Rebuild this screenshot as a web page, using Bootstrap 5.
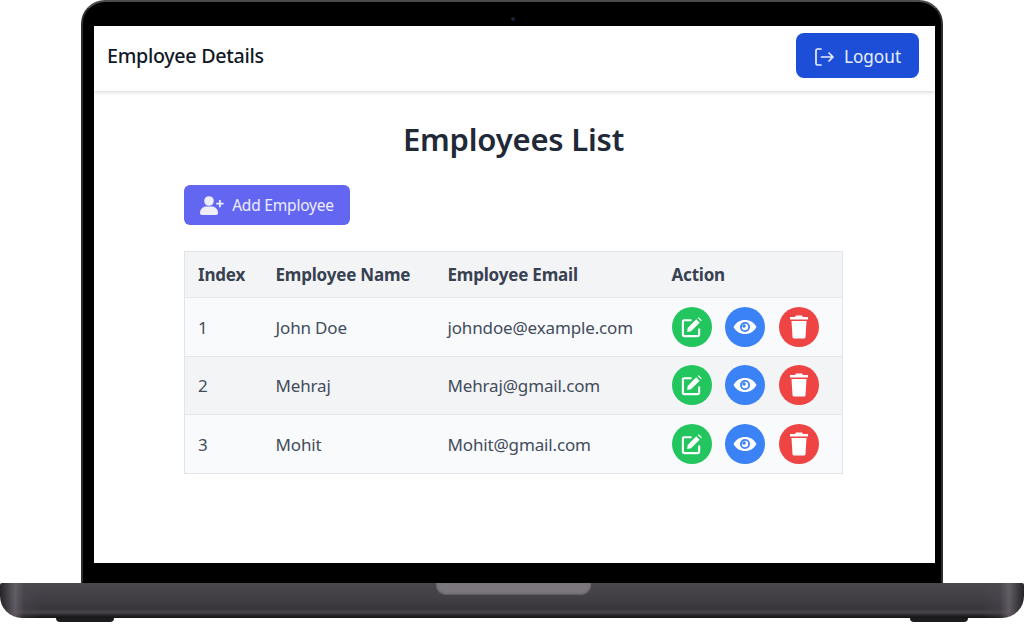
<!DOCTYPE html>
<html lang="en">
<head>
  <meta charset="UTF-8" />
  <meta name="viewport" content="width=device-width, initial-scale=1.0"/>
  <title>Employees List</title>
  <link href="https://cdn.jsdelivr.net/npm/bootstrap@5.3.3/dist/css/bootstrap.min.css" rel="stylesheet"/>
  <style>
    body { background: #fff; font-family: "Noto Sans", "Open Sans", sans-serif; width: 1024px; height: 624px; overflow: hidden; }
    .lid { margin: 0 81px; height: 583px; padding: 24px 6px 20px 11px; background: #000; border: 2px solid #2e2e30; border-top-color: #4a4a4c; border-bottom: 0; border-radius: 24px 24px 0 0; position: relative; }
    .cam { position: absolute; top: 15px; left: 428px; width: 4px; height: 4px; border-radius: 50%; background: #1a2238; }
    .screen { height: 537px; background: #fff; }
    .topbar { height: 65px; padding: 0 16px 6px 13px; box-shadow: 0 1px 4px rgba(0,0,0,.18); }
    .brand-txt { font-size: 19.700px; font-weight: 500; color: #111827; letter-spacing: -.3px; }
    .btn-logout { width: 123px; height: 45px; background: #1d4ed8; color: #e8eeff; border-radius: 8px; font-size: 17.200px; border: 0; padding: 2px 0 0; }
    .btn-logout:hover { background: #1d4ed8; color: #e8eeff; }
    .page-body { padding: 0 92px 0 90px; }
    .page-title { font-size: 31px; font-weight: 600; color: #1f2937; text-align: center; margin: 27px 0 25px; line-height: 42px; letter-spacing: -.2px; }
    .btn-add { width: 166px; height: 40px; background: #6366f1; color: #eef; border-radius: 6px; font-size: 15.500px; border: 0; padding: 1px 0 0; letter-spacing: -.2px; }
    .btn-add:hover { background: #6366f1; color: #eef; }
    .emp-table { width: 659px; margin: 26px 0 0; border: 1px solid #e1e4e9; border-collapse: collapse; table-layout: fixed; color: #434c5b; font-size: 17px; }
    .emp-table th { background: #f3f4f6; font-weight: 700; font-size: 17px; padding: 1px 13px 0; height: 46px; letter-spacing: -.2px; color: #374151; }
    .emp-table td { padding: 1px 13px 0; height: 58.500px; background: #f9fafb; border-top: 1px solid #e5e7eb; letter-spacing: -.15px; }
    .emp-table tr:nth-child(2) td { background: #f3f4f6; }
    .action-cell { column-gap: 13.500px; margin-top: -1px; }
    .round-btn { width: 40px; height: 40px; border-radius: 50%; border: 0; padding: 0; }
    .rb-green { background: #22c55e; }
    .rb-blue { background: #3b82f6; }
    .rb-red { background: #ef4444; }
    .base { height: 35px; background:
      linear-gradient(90deg, rgba(30,28,32,.8) 0, rgba(110,105,112,.7) 15px, rgba(80,76,84,.35) 24px, rgba(70,70,70,0) 42px, rgba(70,70,70,0) 982px, rgba(80,76,84,.35) 1000px, rgba(110,105,112,.7) 1009px, rgba(30,28,32,.8) 1024px),
      linear-gradient(180deg, #4a474d 0, #433f46 40%, #38353b 74%, #46434a 84%, #29272b 92%, #111 100%);
      border-radius: 2px 2px 22px 22px; position: relative; }
    .notch { position: absolute; top: 0; left: 436px; width: 155px; height: 12px; background: #7b777d; border-radius: 0 0 10px 10px; box-shadow: inset 0 -1px 2px #5b575d; }
    .foot { position: absolute; top: 35px; width: 58px; height: 4px; background: #1c1b1d; border-radius: 0 0 14px 14px; }
  </style>
</head>
<body>
  <div class="lid">
    <div class="cam"></div>
    <div class="screen">
      <div class="topbar d-flex align-items-center justify-content-between">
        <span class="brand-txt">Employee Details</span>
        <button type="button" class="btn btn-logout d-flex align-items-center justify-content-center gap-2">
          <svg width="22" height="20" viewBox="0 0 22 20" fill="none" stroke="currentColor" stroke-width="1.7" stroke-linecap="round" stroke-linejoin="round"><path d="M7 2H3.500A1.500 1.500 0 0 0 2 3.500v13A1.500 1.500 0 0 0 3.500 18H7"/><path d="M7.500 10H19M15 6l4 4-4 4"/></svg>
          Logout
        </button>
      </div>
      <div class="page-body">
        <h1 class="page-title">Employees List</h1>
        <button type="button" class="btn btn-add d-flex align-items-center justify-content-center gap-2">
          <svg width="24" height="19" viewBox="0 0 24 19" fill="currentColor"><circle cx="9" cy="5" r="4.800"/><path d="M0 17c0-4 3-6.500 6-6.500h6c3 0 6 2.500 6 6.500 0 1.200-.8 2-2 2H2c-1.200 0-2-.8-2-2z"/><path d="M19 4h1.800v2.700h2.700v1.800h-2.700v2.700H19V8.500h-2.700V6.700H19z"/></svg>
          Add Employee
        </button>
        <table class="emp-table">
          <colgroup><col style="width:78px"><col style="width:172px"><col style="width:224px"><col></colgroup>
          <thead><tr><th>Index</th><th>Employee Name</th><th>Employee Email</th><th>Action</th></tr></thead>
          <tbody id="rows"></tbody>
        </table>
      </div>
    </div>
  </div>
  <div class="base">
    <div class="notch"></div>
    <div class="foot" style="left:56px"></div>
    <div class="foot" style="left:910px"></div>
  </div>

  <script src="https://cdn.jsdelivr.net/npm/bootstrap@5.3.3/dist/js/bootstrap.bundle.min.js"></script>
  <script>
    const employees = [
      ['John Doe', 'johndoe@example.com'],
      ['Mehraj', 'Mehraj@gmail.com'],
      ['Mohit', 'Mohit@gmail.com']
    ];
    const editIcon = '<svg width="23" height="22" viewBox="0 0 24 23" fill="none"><path d="M12 4.500H4.500A1.500 1.500 0 0 0 3 6v14A1.500 1.500 0 0 0 4.500 21h14a1.500 1.500 0 0 0 1.500-1.500V13" stroke="#fff" stroke-width="2.200"/><path d="M8 12.500 17 3.500l3.500 3.500-9 9-4 .8z" fill="#fff"/><path d="M18.500 2l1-.8 3.300 3.300-.8 1z" fill="#fff"/></svg>';
    const eyeIcon = '<svg width="24" height="16" viewBox="0 0 24 16"><path d="M.5 8C3 3.500 7 1 12 1s9 2.500 11.500 7C21 12.500 17 15 12 15S3 12.500.5 8z" fill="#fff"/><circle cx="12" cy="8" r="5" fill="#3b82f6"/><circle cx="12" cy="8" r="3.200" fill="#fff"/><circle cx="11" cy="7" r="1.800" fill="#3b82f6"/></svg>';
    const trashIcon = '<svg width="18" height="24" viewBox="0 0 18 24" fill="#fff"><path d="M6 .5h6L13 2h5v2.500H0V2h5z"/><path d="M1.500 6h15l-1 16c-.1 1-.8 1.500-1.600 1.500H4.100c-.8 0-1.500-.5-1.600-1.500z"/></svg>';
    document.getElementById('rows').innerHTML = employees.map((e, i) => `
      <tr>
        <td>${i + 1}</td><td>${e[0]}</td><td>${e[1]}</td>
        <td><div class="action-cell d-flex">
          <button type="button" class="round-btn rb-green d-flex align-items-center justify-content-center">${editIcon}</button>
          <button type="button" class="round-btn rb-blue d-flex align-items-center justify-content-center">${eyeIcon}</button>
          <button type="button" class="round-btn rb-red d-flex align-items-center justify-content-center">${trashIcon}</button>
        </div></td>
      </tr>`).join('');
  </script>
</body>
</html>
